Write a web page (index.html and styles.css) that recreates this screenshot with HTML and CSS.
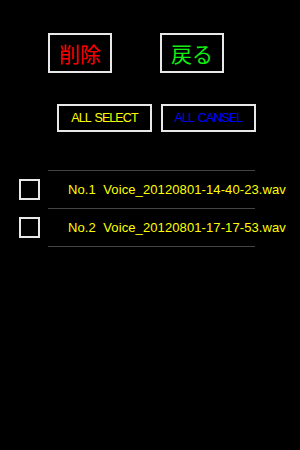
FILE: index.html
```html
<!DOCTYPE html>
<html lang="ja">

<head>
   <meta charset="UTF-8">
   <meta name="viewport" content="width=device-width, initial-scale=1.0">
   <title>録音ファイル削除</title>
   <link rel="stylesheet" href="styles.css">
</head>

<body>
   <!-- 上のボタン -->
   <div class="main-actions">
      <button class="big-btn delete">削除</button>
      <button class="big-btn back">戻る</button>
   </div>

   <div class="select-actions">
      <button class="small-btn select-all">ALL SELECT</button>
      <button class="small-btn cancel-all">ALL CANSEL</button>
   </div>

   <!-- ファイル一覧 -->
   <div class="file-list">
      <div class="divider"></div>
      <div class="file-row">
         <span class="check"></span>
         <span class="file-name">No.1&nbsp;&nbsp;Voice_20120801-14-40-23.wav</span>
      </div>
      <div class="divider"></div>
      <div class="file-row">
         <span class="check"></span>
         <span class="file-name">No.2&nbsp;&nbsp;Voice_20120801-17-17-53.wav</span>
      </div>
      <div class="divider"></div>
   </div>
</body>

</html>
```

FILE: styles.css
```css
* {
   margin: 0;
   padding: 0;
   box-sizing: border-box;
   font-family: 'Liberation Sans', 'Noto Sans CJK JP', sans-serif;
}

body {
   background: #000;
   width: 300px;
   height: 450px;
   overflow: hidden;
}

.main-actions {
   display: flex;
   gap: 48px;
   padding: 33px 0 0 48px;
}

.big-btn {
   width: 64px;
   height: 40px;
   background: #000;
   border: 2px solid #e8e8e8;
   font-size: 21px;
   display: flex;
   align-items: center;
   justify-content: center;
}

.delete {
   color: #ff0000;
}

.back {
   color: #11ee11;
}

.select-actions {
   display: flex;
   gap: 9px;
   padding: 31px 0 0 57px;
}

.small-btn {
   width: 95px;
   height: 28px;
   background: #000;
   border: 2px solid #e8e8e8;
   font-size: 12.5px;
   letter-spacing: -0.9px;
   word-spacing: 1.5px;
   display: flex;
   align-items: center;
   justify-content: center;
}

.select-all {
   color: #ffff00;
}

.cancel-all {
   color: #0000ff;
}

.file-list {
   margin-top: 38px;
}

.divider {
   height: 1px;
   width: 207px;
   margin-left: 48px;
   background: #444;
}

.file-row {
   height: 37px;
   display: flex;
   align-items: center;
   padding-left: 19px;
}

.check {
   width: 21px;
   height: 21px;
   border: 2px solid #e8e8e8;
   flex-shrink: 0;
}

.file-name {
   margin-left: 28px;
   color: #ffff00;
   font-size: 13px;
   letter-spacing: 0.1px;
   white-space: nowrap;
}
```
